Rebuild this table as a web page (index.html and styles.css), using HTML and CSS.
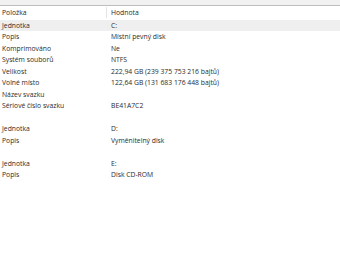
FILE: index.html
```html
<!DOCTYPE html>
<html lang="cs">
<head>
  <meta charset="UTF-8" />
  <title>Informace o systému - Jednotky</title>
  <link rel="stylesheet" href="styles.css">
</head>
<body>
  <div class="top-edge"></div>
  <div class="list">
    <div class="row head">
      <div class="cell">Položka</div>
      <div class="cell val">Hodnota</div>
    </div>
    <div class="row selected">
      <div class="cell">Jednotka</div>
      <div class="cell val">C:</div>
    </div>
    <div class="row"><div class="cell">Popis</div><div class="cell val">Místní pevný disk</div></div>
    <div class="row"><div class="cell">Komprimováno</div><div class="cell val">Ne</div></div>
    <div class="row"><div class="cell">Systém souborů</div><div class="cell val">NTFS</div></div>
    <div class="row"><div class="cell">Velikost</div><div class="cell val">222,94 GB (239 375 753 216 bajtů)</div></div>
    <div class="row"><div class="cell">Volné místo</div><div class="cell val">122,64 GB (131 683 176 448 bajtů)</div></div>
    <div class="row"><div class="cell">Název svazku</div><div class="cell val"></div></div>
    <div class="row"><div class="cell">Sériové číslo svazku</div><div class="cell val">BE41A7C2</div></div>
    <div class="row"></div>
    <div class="row"><div class="cell">Jednotka</div><div class="cell val">D:</div></div>
    <div class="row"><div class="cell">Popis</div><div class="cell val">Vyměnitelný disk</div></div>
    <div class="row"></div>
    <div class="row"><div class="cell">Jednotka</div><div class="cell val">E:</div></div>
    <div class="row"><div class="cell">Popis</div><div class="cell val">Disk CD-ROM</div></div>
  </div>
</body>
</html>
```
FILE: styles.css
```css
* { box-sizing: border-box; margin: 0; padding: 0; }
body {
  font-family: 'Open Sans', 'Noto Sans', sans-serif;
  font-size: 6.8px;
  color: #2b2b2b;
  background: #fff;
  width: 340px;
  height: 255px;
  overflow: hidden;
}

.top-edge {
  height: 6px;
  background: #f1f1f1;
  border-bottom: 1px solid #bdbdbd;
}

.row {
  display: grid;
  grid-template-columns: 109px 1fr;
  height: 11.5px;
  align-items: center;
}
.row.head {
  height: 13.5px;
}
.row.head .val {
  border-left: 1px solid #e4e4e4;
  padding-left: 4px;
  margin-left: -3px;
}
.row.selected {
  background: #efefef;
}
.cell {
  padding-left: 2px;
  white-space: nowrap;
  line-height: 11px;
}
.cell.val {
  padding-left: 2px;
}
```
